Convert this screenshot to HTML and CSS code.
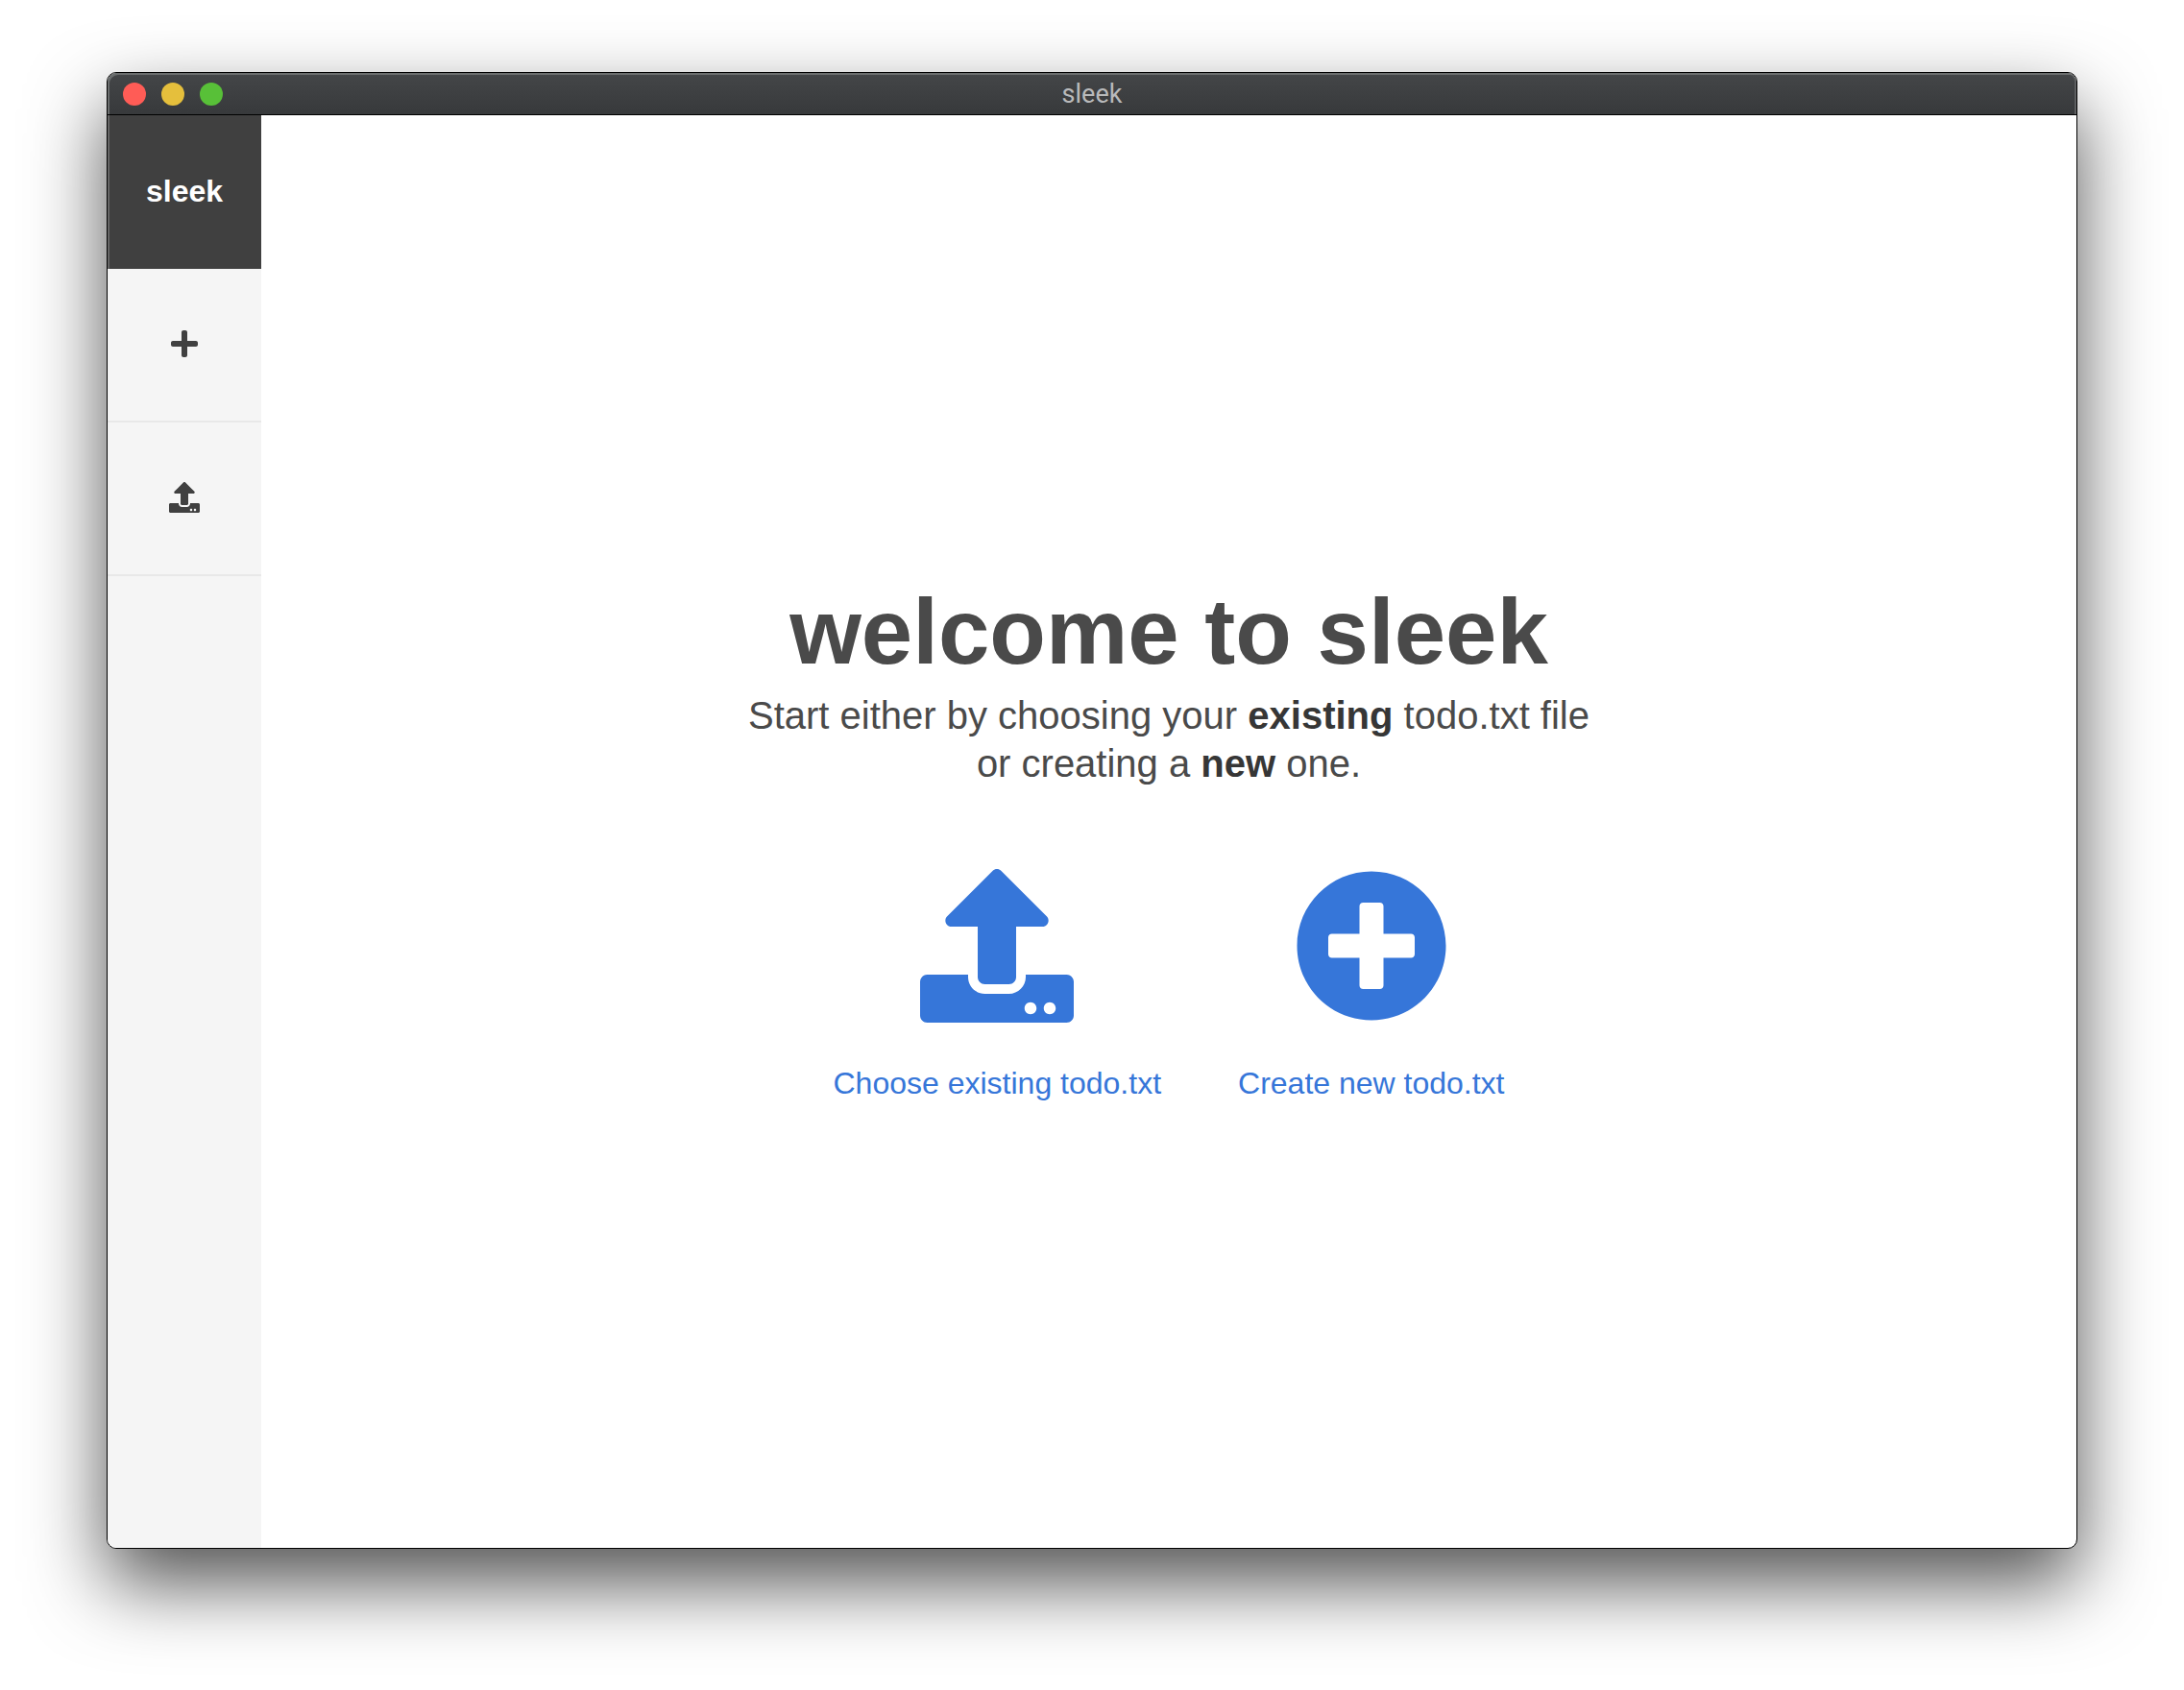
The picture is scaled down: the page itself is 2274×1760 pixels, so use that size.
FILE: index.html
```html
<!DOCTYPE html>
<html lang="en">
<head>
  <meta charset="utf-8">
  <title>sleek</title>
  <link rel="stylesheet" href="styles.css">
</head>
<body>
  <div class="window">
    <header class="titlebar">
      <div class="controls">
        <button class="control close" type="button" aria-label="Close"></button>
        <button class="control minimize" type="button" aria-label="Minimize"></button>
        <button class="control zoom" type="button" aria-label="Zoom"></button>
      </div>
      <span class="titlebar-text">sleek</span>
    </header>
    <div class="app">
      <nav class="sidebar">
        <a class="brand" href="#">sleek</a>
        <a class="nav-item" href="#new" aria-label="Create">
          <svg class="nav-icon" viewBox="0 0 448 512" aria-hidden="true"><path d="M416 208H272V64c0-17.67-14.33-32-32-32h-32c-17.67 0-32 14.33-32 32v144H32c-17.67 0-32 14.33-32 32v32c0 17.67 14.33 32 32 32h144v144c0 17.67 14.33 32 32 32h32c17.67 0 32-14.33 32-32V304h144c17.67 0 32-14.33 32-32v-32c0-17.67-14.33-32-32-32z"/></svg>
        </a>
        <a class="nav-item" href="#open" aria-label="Open">
          <svg class="nav-icon" viewBox="0 0 512 512" aria-hidden="true"><path d="M296 384h-80c-13.3 0-24-10.7-24-24V192h-87.7c-17.8 0-26.7-21.5-14.1-34.1L242.3 5.7c7.5-7.5 19.8-7.5 27.3 0l152.2 152.2c12.6 12.6 3.7 34.1-14.1 34.1H320v168c0 13.3-10.7 24-24 24zm216-8v112c0 13.3-10.7 24-24 24H24c-13.3 0-24-10.7-24-24V376c0-13.3 10.7-24 24-24h136v8c0 30.9 25.1 56 56 56h80c30.9 0 56-25.1 56-56v-8h136c13.3 0 24 10.7 24 24zm-124 88c0-11-9-20-20-20s-20 9-20 20 9 20 20 20 20-9 20-20zm64 0c0-11-9-20-20-20s-20 9-20 20 9 20 20 20 20-9 20-20z"/></svg>
        </a>
      </nav>
      <main class="welcome">
        <h1 class="title">welcome to sleek</h1>
        <p class="subtitle">Start either by choosing your <strong>existing</strong> todo.txt file<br>or creating a <strong>new</strong> one.</p>
        <div class="actions">
          <a class="action" href="#open">
            <svg class="action-icon" viewBox="0 0 512 512" aria-hidden="true"><path d="M296 384h-80c-13.3 0-24-10.7-24-24V192h-87.7c-17.8 0-26.7-21.5-14.1-34.1L242.3 5.7c7.5-7.5 19.8-7.5 27.3 0l152.2 152.2c12.6 12.6 3.7 34.1-14.1 34.1H320v168c0 13.3-10.7 24-24 24zm216-8v112c0 13.3-10.7 24-24 24H24c-13.3 0-24-10.7-24-24V376c0-13.3 10.7-24 24-24h136v8c0 30.9 25.1 56 56 56h80c30.9 0 56-25.1 56-56v-8h136c13.3 0 24 10.7 24 24zm-124 88c0-11-9-20-20-20s-20 9-20 20 9 20 20 20 20-9 20-20zm64 0c0-11-9-20-20-20s-20 9-20 20 9 20 20 20 20-9 20-20z"/></svg>
            <span>Choose existing todo.txt</span>
          </a>
          <a class="action" href="#new">
            <svg class="action-icon" viewBox="0 0 512 512" aria-hidden="true"><path d="M256 8C119 8 8 119 8 256s111 248 248 248 248-111 248-248S393 8 256 8zm144 276c0 6.6-5.4 12-12 12h-92v92c0 6.6-5.4 12-12 12h-56c-6.6 0-12-5.4-12-12v-92h-92c-6.6 0-12-5.4-12-12v-56c0-6.6 5.4-12 12-12h92v-92c0-6.6 5.4-12 12-12h56c6.6 0 12 5.4 12 12v92h92c6.6 0 12 5.4 12 12v56z"/></svg>
            <span>Create new todo.txt</span>
          </a>
        </div>
      </main>
    </div>
  </div>
</body>
</html>
```
FILE: styles.css
```css
* {
  box-sizing: border-box;
}

body {
  margin: 0;
  min-height: 100vh;
  padding: 75px 111px 147px;
  display: flex;
  background: #fff;
  color: #4a4a4a;
  font-family: "Liberation Sans", Helvetica, Arial, sans-serif;
}

a {
  text-decoration: none;
}

.window {
  flex: 1;
  display: flex;
  flex-direction: column;
  overflow: hidden;
  border: 1px solid #000;
  border-radius: 10px;
  background: #fff;
  box-shadow: 0 36px 80px rgba(0, 0, 0, 0.68);
}

/* Title bar */
.titlebar {
  height: 44px;
  padding: 0 16px;
  display: grid;
  grid-template-columns: 1fr auto 1fr;
  align-items: center;
  border-radius: 9px 9px 0 0;
  background: linear-gradient(#444648, #37393b);
  box-shadow: inset 0 -1px #000, inset 2px 2px #6b6e6e, inset -2px 0 #5c5e60;
}

.controls {
  display: flex;
  gap: 16px;
}

.control {
  width: 24px;
  height: 24px;
  padding: 0;
  border: 0;
  border-radius: 50%;
}

.close {
  background: #ff5c56;
}

.minimize {
  background: #e5bf3c;
}

.zoom {
  background: #58c038;
}

.titlebar-text {
  color: #b9babb;
  font-family: Roboto, sans-serif;
  font-size: 27px;
  line-height: 32px;
}

/* Sidebar */
.app {
  flex: 1;
  display: flex;
}

.sidebar {
  width: 160px;
  flex: none;
  background: #f5f5f5;
}

.brand,
.nav-item {
  height: 160px;
  padding-bottom: 2px;
  display: flex;
  align-items: center;
  justify-content: center;
}

.brand {
  background: #404040;
  box-shadow: inset 2px 0 #666;
  color: #fff;
  font-size: 32px;
  font-weight: 700;
  line-height: 36px;
}

.nav-item {
  border-bottom: 2px solid #e8e8e8;
}

.nav-icon {
  height: 32px;
  fill: #404040;
}

/* Welcome screen */
.welcome {
  flex: 1;
  padding-top: 24px;
  display: flex;
  flex-direction: column;
  align-items: center;
  justify-content: center;
  text-align: center;
}

.title {
  margin: 0 0 8px;
  font-size: 96px;
  line-height: 108px;
}

.subtitle {
  margin: 0 0 85px;
  font-size: 40px;
  line-height: 50px;
}

.subtitle strong {
  color: #363636;
}

.actions {
  display: flex;
  gap: 80px;
}

.action {
  display: flex;
  flex-direction: column;
  align-items: center;
  gap: 39px;
  color: #3676d9;
  font-size: 32px;
  line-height: 48px;
}

.action-icon {
  width: 160px;
  height: 160px;
  fill: currentColor;
}
```
